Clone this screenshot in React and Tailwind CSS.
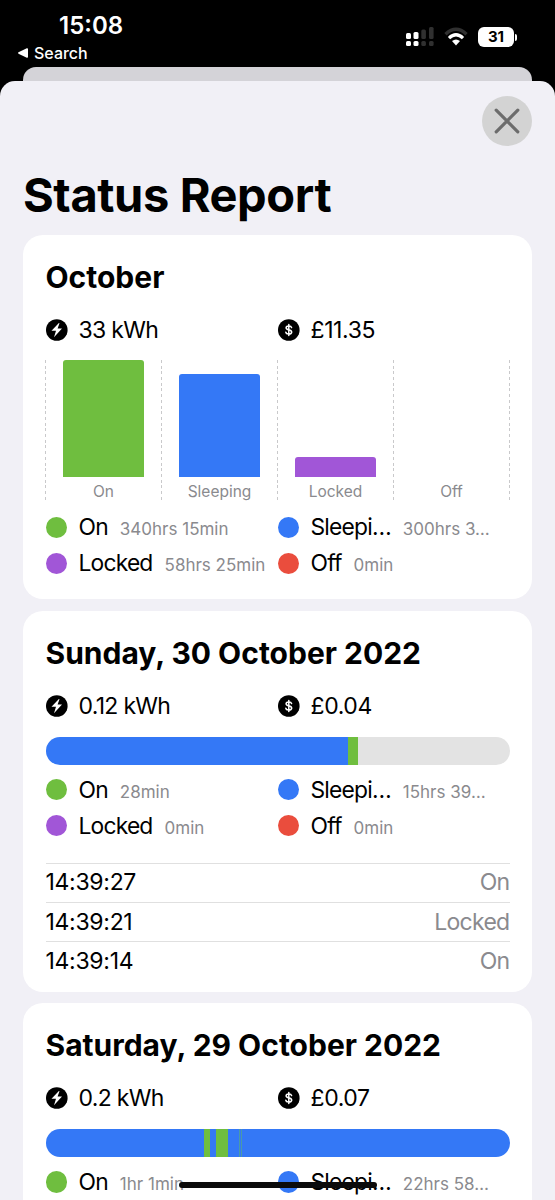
const COLORS = {
  on: 'bg-[#6fbe3f]',
  sleeping: 'bg-[#3478f6]',
  locked: 'bg-[#a156d7]',
  off: 'bg-[#ea4d3d]',
  none: 'bg-[#e3e3e3]',
}

const CHART = [
  { label: 'On', color: COLORS.on, height: 117 },
  { label: 'Sleeping', color: COLORS.sleeping, height: 103 },
  { label: 'Locked', color: COLORS.locked, height: 20 },
  { label: 'Off', color: COLORS.off, height: 0 },
]

const LEGEND = [
  { label: 'On', color: COLORS.on },
  { label: 'Sleepi…', color: COLORS.sleeping },
  { label: 'Locked', color: COLORS.locked },
  { label: 'Off', color: COLORS.off },
]

// segment widths are in px of the 464px track
const DAYS = [
  {
    title: 'Sunday, 30 October 2022',
    energy: '0.12 kWh',
    cost: '£0.04',
    times: ['28min', '15hrs 39…', '0min', '0min'],
    segments: [
      [COLORS.sleeping, 302.5],
      [COLORS.on, 10],
      [COLORS.none, 151.5],
    ],
    events: [
      ['14:39:27', 'On'],
      ['14:39:21', 'Locked'],
      ['14:39:14', 'On'],
    ],
  },
  {
    title: 'Saturday, 29 October 2022',
    energy: '0.2 kWh',
    cost: '£0.07',
    times: ['1hr 1min', '22hrs 58…'],
    segments: [
      [COLORS.sleeping, 158],
      [COLORS.on, 6],
      [COLORS.sleeping, 6],
      [COLORS.on, 12.5],
      [COLORS.sleeping, 10.5],
      ['bg-[#4a9aa8]', 1],
      [COLORS.sleeping, 1],
      ['bg-[#4a9aa8]', 1],
      [COLORS.sleeping, 268],
    ],
    events: [],
  },
]

function StatusBar() {
  return (
    <div className="flex h-[67px] shrink-0 justify-between text-white">
      <div className="pl-[18px] pt-3">
        <div className="pl-[41px] text-[24px] leading-[28px] font-semibold">15:08</div>
        <div className="mt-[3px] flex items-center gap-[6px] text-[16px] leading-5 font-medium">
          <svg width="10" height="10" viewBox="0 0 10 10" fill="currentColor">
            <path d="M0.5 4.3 8.8 0.2Q10 0 10 1V9Q10 10 8.8 9.7L0.5 5.7Q-0.3 5 0.5 4.3Z" />
          </svg>
          <span>Search</span>
        </div>
      </div>
      <div className="mt-[27px] flex h-5 items-center pr-[38px]">
        <svg width="28" height="20" viewBox="0 0 28 20" fill="white">
          <rect x="0" y="6" width="5" height="6" rx="1.5" />
          <rect x="0" y="14" width="5" height="5" rx="1.5" />
          <rect x="7.5" y="5" width="5" height="7" rx="1.5" />
          <rect x="7.5" y="14" width="5" height="5" rx="1.5" />
          <g fill="#303030">
            <rect x="15.3" y="2.5" width="4.6" height="9.5" rx="1.5" />
            <rect x="15.3" y="14" width="4.6" height="5" rx="1.5" />
            <rect x="23" y="0" width="4.6" height="12" rx="1.5" />
            <rect x="23" y="14" width="4.6" height="5" rx="1.5" />
          </g>
        </svg>
        <svg className="ml-[10px]" width="24" height="20" viewBox="0 0 24 20" fill="none">
          <path d="M1.5 7.2Q12 -2.6 22.5 7.2" stroke="#303030" strokeWidth="3.4" />
          <path d="M5 11.1Q12 4.6 19 11.1" stroke="white" strokeWidth="3.3" />
          <path d="M8 14.1Q12 10.8 16 14.1L12 18.4Z" fill="white" />
        </svg>
        <div className="ml-[10px] flex h-[20px] w-[36px] items-center justify-center rounded-[6px] bg-white text-[15px] font-bold text-black">31</div>
        <div className="ml-px h-[7px] w-[2px] rounded-r-full bg-white" />
      </div>
    </div>
  )
}

function BoltIcon() {
  return (
    <svg className="size-[22px] shrink-0" viewBox="0 0 22 22">
      <circle cx="10.8" cy="11" r="10.8" />
      <path d="M12.9 3.9 5.5 11.8H10L8 18.2 16 9.6H11.6L13.5 4.2Z" fill="white" />
    </svg>
  )
}

function DollarIcon() {
  return (
    <svg className="size-[22px] shrink-0" viewBox="0 0 22 22">
      <circle cx="10.8" cy="11" r="10.8" />
      <path
        d="M13.6 8.6Q13.2 6.9 10.8 6.9T8.1 8.7Q8.1 10.3 10.8 10.8T13.7 13.2Q13.5 15.1 10.8 15.1T7.8 13.2M10.8 5.4V16.6"
        fill="none"
        stroke="white"
        strokeWidth="1.5"
        strokeLinecap="round"
      />
    </svg>
  )
}

function Summary({ energy, cost }) {
  return (
    <div className="mt-[21px] grid h-6 grid-cols-2 text-[23px] leading-6">
      <div className="flex items-center gap-[11px] tracking-[-0.7px]">
        <BoltIcon />
        {energy}
      </div>
      <div className="flex items-center gap-[11px] tracking-[-0.4px]">
        <DollarIcon />
        {cost}
      </div>
    </div>
  )
}

function Legend({ times }) {
  return (
    <div className="grid grid-cols-2">
      {times.map((time, i) => (
        <div key={LEGEND[i].label} className="flex h-9 items-center leading-6 whitespace-nowrap">
          <span className={`size-[21.5px] shrink-0 rounded-full ${LEGEND[i].color}`} />
          <div className="mt-[2px] ml-[11.5px] flex items-baseline gap-3">
            <span className="text-[22.8px] tracking-[-0.8px]">{LEGEND[i].label}</span>
            <span className="text-[17px] text-[#8a8a8e]">{time}</span>
          </div>
        </div>
      ))}
    </div>
  )
}

function GridLine() {
  return <span className="h-full w-px shrink-0 bg-[repeating-linear-gradient(to_bottom,#c9c9cb_0px,#c9c9cb_3px,transparent_3px,transparent_5.7px)]" />
}

function BarChart() {
  return (
    <div className="mt-[18.6px] mr-[0.5px] -ml-[0.5px] flex h-[140px]">
      {CHART.map((bar) => (
        <div key={bar.label} className="flex flex-1">
          <GridLine />
          <div className="flex flex-1 flex-col items-center">
            <div className="flex h-[117px] shrink-0 items-end">
              <div className={`w-[81px] rounded-t-[3px] ${bar.color}`} style={{ height: bar.height }} />
            </div>
            <span className="mt-[5px] text-[15.5px] leading-5 text-[#8a8a8e]">{bar.label}</span>
          </div>
        </div>
      ))}
      <div className="-mr-px flex">
        <GridLine />
      </div>
    </div>
  )
}

function Card({ title, children }) {
  return (
    <section className="rounded-[20px] bg-white px-[22.5px] pt-[22px]">
      <h2 className="text-[30px] leading-10 font-bold whitespace-nowrap">{title}</h2>
      {children}
    </section>
  )
}

function DayCard({ day }) {
  return (
    <Card title={day.title}>
      <Summary energy={day.energy} cost={day.cost} />
      <div className="mt-[19px] mb-[7px] flex h-[28px] overflow-hidden rounded-full">
        {day.segments.map(([color, width], i) => (
          <span key={i} className={`shrink-0 ${color}`} style={{ width }} />
        ))}
      </div>
      <Legend times={day.times} />
      <div className="mt-[19px] pb-[11.3px]">
        {day.events.map(([time, status]) => (
          <div
            key={time}
            className="flex h-[39.3px] items-center justify-between border-t border-[#e0e0e0] text-[23px]"
          >
            <span className="tracking-[-0.3px]">{time}</span>
            <span className="tracking-[-0.7px] text-[#8a8a8e]">{status}</span>
          </div>
        ))}
      </div>
    </Card>
  )
}

export default function App() {
  return (
    <div className="relative flex h-[1200px] w-[555px] flex-col overflow-hidden bg-black font-['Inter',sans-serif] text-black">
      <StatusBar />
      <div className="mx-[23px] h-[14px] shrink-0 rounded-t-[13px] bg-[#d4d3d8]" />
      <main className="flex-1 rounded-t-[15px] bg-[#f1f0f6] px-[23px] pt-[15px]">
        <div className="flex justify-end">
          <button className="flex size-[50px] items-center justify-center rounded-full bg-[#d3d3d3]" aria-label="Close">
            <svg width="26" height="26" viewBox="0 0 26 26" stroke="#6c6c6c" strokeWidth="3.2" strokeLinecap="round">
              <path d="M2.2 2.2 23.8 23.8M23.8 2.2 2.2 23.8" />
            </svg>
          </button>
        </div>
        <h1 className="mt-[24px] mb-[14.7px] text-[47px] leading-[50px] font-bold tracking-[-0.4px] whitespace-nowrap">Status Report</h1>
        <div className="flex flex-col gap-[11.3px]">
          <Card title="October">
            <Summary energy="33 kWh" cost="£11.35" />
            <BarChart />
            <div className="mt-[9px] pb-[18px]">
              <Legend times={['340hrs 15min', '300hrs 3…', '58hrs 25min', '0min']} />
            </div>
          </Card>
          {DAYS.map((day) => (
            <DayCard key={day.title} day={day} />
          ))}
        </div>
      </main>
      {/* home indicator */}
      <div className="absolute bottom-[12px] left-[179px] h-[6px] w-[198px] rounded-full bg-[#0b0b0b]" />
    </div>
  )
}
